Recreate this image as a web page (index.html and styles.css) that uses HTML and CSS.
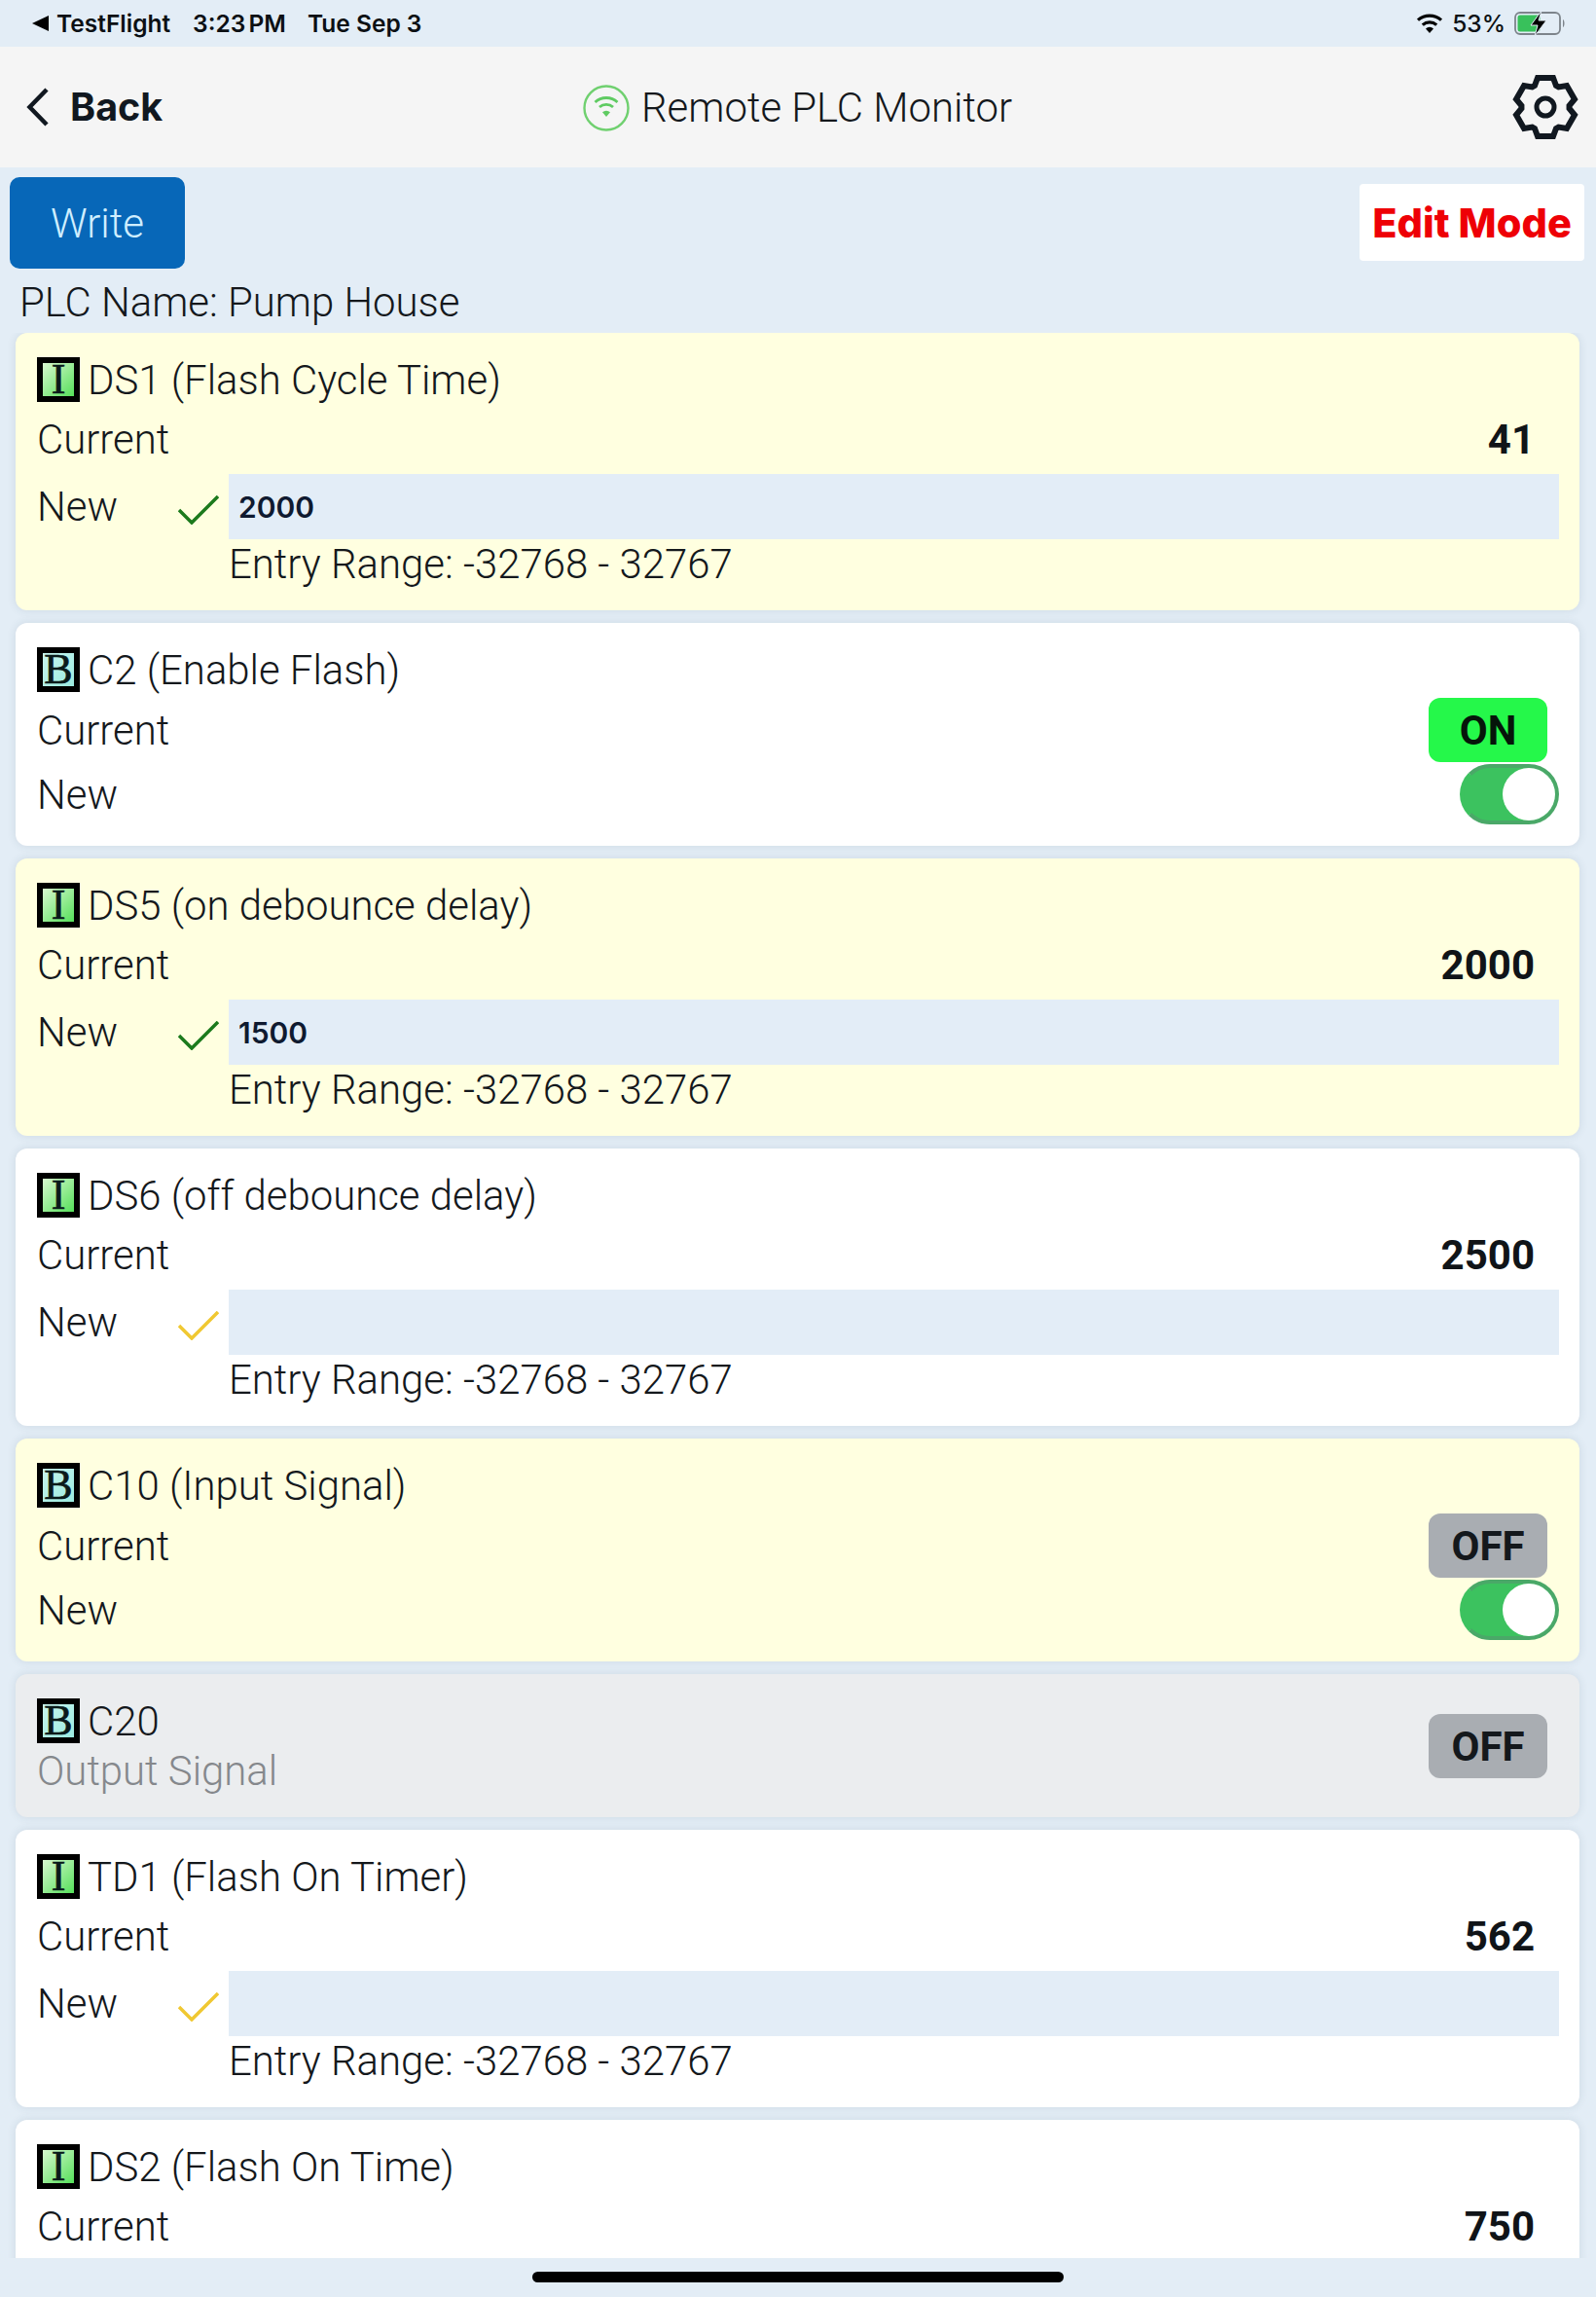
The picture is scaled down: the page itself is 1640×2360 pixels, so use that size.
FILE: index.html
```html
<!DOCTYPE html>
<html lang="en">
<head>
<meta charset="utf-8">
<title>Remote PLC Monitor</title>
<link rel="stylesheet" href="styles.css">
</head>
<body>
<div class="app">
  <div class="status">
    <div class="status-left">
      <svg class="st-back" viewBox="0 0 17 16"><path d="M17 0V16L0 8Z"/></svg>
      <span class="st-app">TestFlight</span>
      <span class="st-time">3:23 PM</span>
      <span class="st-date">Tue Sep 3</span>
    </div>
    <div class="status-right">
      <svg class="st-wifi" viewBox="0 0 28 20"><path d="M14 20l-4-4.600a6 6 0 0 1 8 0z"/><path d="M6.800 11.600a11 11 0 0 1 14.400 0" fill="none" stroke="#000" stroke-width="3.200"/><path d="M2 6.600a18.500 18.500 0 0 1 24 0" fill="none" stroke="#000" stroke-width="3.200"/></svg>
      <span class="st-pct">53%</span>
      <svg class="st-batt" viewBox="0 0 54 26"><rect x="1" y="2" width="46" height="22" rx="5" fill="none" stroke="#7d848b" stroke-width="1.800"/><rect x="3.500" y="4.500" width="23" height="17" rx="2.500" fill="#38c15b"/><path d="M50 9c2 1 2 7 0 8z" fill="#7d848b"/><path d="M28 0L17 15h7l-3 11 12-16h-8z" fill="#000" stroke="#e3edf6" stroke-width="1"/></svg>
    </div>
  </div>

  <header class="nav">
    <div class="nav-back">
      <svg class="chev" viewBox="0 0 24 40"><path d="M21 2L3.500 20 21 38" fill="none" stroke="#111820" stroke-width="4.500"/></svg>
      <span class="back-text">Back</span>
    </div>
    <div class="nav-title">
      <svg class="conn" viewBox="0 0 48 48"><circle cx="24" cy="24" r="22.500" fill="none" stroke="#6fd06f" stroke-width="2.400"/><path d="M24 33l-4-4.800a6 6 0 0 1 8 0z" fill="#5fcb62"/><path d="M17 23a10.500 10.500 0 0 1 14 0" fill="none" stroke="#5fcb62" stroke-width="2.800"/><path d="M12.500 18a17 17 0 0 1 23 0" fill="none" stroke="#5fcb62" stroke-width="2.800"/></svg>
      <span class="title-text">Remote PLC Monitor</span>
    </div>
    <svg class="gear" viewBox="-34 -34 68 68"><path d="M-8-30L8-30L11-22L13.550-20.530L21.980-21.930L29.980-8.070L24.550-1.470L24.550 1.470L29.980 8.070L21.980 21.930L13.550 20.530L11 22L8 30L-8 30L-11 22L-13.550 20.530L-21.980 21.930L-29.980 8.070L-24.550 1.470L-24.550-1.470L-29.980-8.070L-21.980-21.930L-13.550-20.530L-11-22Z" fill="none" stroke="#111820" stroke-width="6" stroke-linejoin="miter"/><circle r="9" fill="none" stroke="#111820" stroke-width="5"/></svg>
  </header>

  <div class="toolbar">
    <button class="write">Write</button>
    <div class="edit-mode">Edit Mode</div>
  </div>
  <div class="plc-name">PLC Name: Pump House</div>

  <main class="list">
    <section class="card yellow">
      <div class="head"><span class="tag tag-i">I</span><span class="name">DS1 (Flash Cycle Time)</span></div>
      <div class="row-cur"><span>Current</span><span class="val">41</span></div>
      <div class="row-new"><span class="new-label">New</span>
        <svg class="check ok" viewBox="0 0 42 30"><path d="M1 15l13 13L41 1"/></svg>
        <input class="entry" value="2000" readonly></div>
      <div class="range">Entry Range: -32768 - 32767</div>
    </section>

    <section class="card">
      <div class="head"><span class="tag tag-b">B</span><span class="name">C2 (Enable Flash)</span></div>
      <div class="row-badge"><span>Current</span><span class="badge on">ON</span></div>
      <div class="row-toggle"><span>New</span><span class="toggle"><span class="knob"></span></span></div>
    </section>

    <section class="card yellow">
      <div class="head"><span class="tag tag-i">I</span><span class="name">DS5 (on debounce delay)</span></div>
      <div class="row-cur"><span>Current</span><span class="val">2000</span></div>
      <div class="row-new"><span class="new-label">New</span>
        <svg class="check ok" viewBox="0 0 42 30"><path d="M1 15l13 13L41 1"/></svg>
        <input class="entry" value="1500" readonly></div>
      <div class="range">Entry Range: -32768 - 32767</div>
    </section>

    <section class="card">
      <div class="head"><span class="tag tag-i">I</span><span class="name">DS6 (off debounce delay)</span></div>
      <div class="row-cur"><span>Current</span><span class="val">2500</span></div>
      <div class="row-new"><span class="new-label">New</span>
        <svg class="check warn" viewBox="0 0 42 30"><path d="M1 15l13 13L41 1"/></svg>
        <input class="entry" value="" readonly></div>
      <div class="range">Entry Range: -32768 - 32767</div>
    </section>

    <section class="card yellow">
      <div class="head"><span class="tag tag-b">B</span><span class="name">C10 (Input Signal)</span></div>
      <div class="row-badge"><span>Current</span><span class="badge off">OFF</span></div>
      <div class="row-toggle"><span>New</span><span class="toggle"><span class="knob"></span></span></div>
    </section>

    <section class="card gray">
      <div class="gray-left">
        <div class="head"><span class="tag tag-b">B</span><span class="name">C20</span></div>
        <div class="sub">Output Signal</div>
      </div>
      <span class="badge off">OFF</span>
    </section>

    <section class="card">
      <div class="head"><span class="tag tag-i">I</span><span class="name">TD1 (Flash On Timer)</span></div>
      <div class="row-cur"><span>Current</span><span class="val">562</span></div>
      <div class="row-new"><span class="new-label">New</span>
        <svg class="check warn" viewBox="0 0 42 30"><path d="M1 15l13 13L41 1"/></svg>
        <input class="entry" value="" readonly></div>
      <div class="range">Entry Range: -32768 - 32767</div>
    </section>

    <section class="card cut">
      <div class="head"><span class="tag tag-i">I</span><span class="name">DS2 (Flash On Time)</span></div>
      <div class="row-cur"><span>Current</span><span class="val">750</span></div>
    </section>
  </main>

  <div class="home-area"><div class="home-bar"></div></div>
</div>
</body>
</html>
```
FILE: styles.css
```css
* { box-sizing: border-box; }
html, body { margin: 0; padding: 0; }
body {
  width: 1640px;
  height: 2360px;
  overflow: hidden;
  background: #e3edf6;
  font-family: Roboto, "Liberation Sans", sans-serif;
  font-weight: 300;
  font-size: 41.900px;
  color: #14181c;
}
.app { display: flex; flex-direction: column; height: 2360px; }

.status {
  height: 48px;
  flex: none;
  display: flex;
  justify-content: space-between;
  align-items: center;
  padding: 0 30px 0 33px;
  font-family: Inter, "Liberation Sans", sans-serif;
  font-size: 24.500px;
  font-weight: 600;
  color: #0c1014;
}
.status-left, .status-right { display: flex; align-items: center; }
.st-back { width: 17px; height: 16px; margin-right: 8px; }
.st-time { margin-left: 23px; word-spacing: -3px; }
.st-date { margin-left: 22px; }
.st-wifi { width: 28px; height: 20px; margin-right: 9px; }
.st-batt { width: 54px; height: 26px; margin-left: 9px; }
.st-pct { font-weight: 500; }

.nav {
  height: 124px;
  flex: none;
  background: #f5f5f5;
  display: flex;
  align-items: center;
  justify-content: space-between;
  padding: 0 18px 0 27px;
  position: relative;
}
.nav-back { display: flex; align-items: center; }
.chev { width: 24px; height: 40px; margin-right: 21px; }
.back-text { font-family: Inter, "Liberation Sans", sans-serif; font-weight: 700; font-size: 39.500px; color: #111820; }
.nav-title {
  position: absolute;
  left: 599px;
  top: 38px;
  display: flex;
  align-items: center;
  gap: 12px;
}
.conn { width: 48px; height: 48px; }
.title-text { font-size: 41.900px; color: #14181c; }
.gear { width: 68px; height: 68px; }

.toolbar {
  flex: none;
  height: 94px;
  margin-top: 10px;
  padding: 0 12px 0 10px;
  display: flex;
  justify-content: space-between;
  align-items: flex-start;
}
.write {
  width: 180px;
  height: 94px;
  border: 0;
  border-radius: 10px;
  background: #0767b8;
  color: #cfeeff;
  font-family: Roboto, sans-serif;
  font-weight: 300;
  font-size: 42px;
}
.edit-mode {
  width: 231px;
  height: 79px;
  margin-top: 7px;
  background: #fff;
  border-radius: 4px;
  color: #ee0006;
  font-family: Inter, "Liberation Sans", sans-serif;
  font-weight: 800;
  font-size: 41.500px;
  display: flex;
  align-items: center;
  justify-content: center;
}
.plc-name {
  flex: none;
  height: 66px;
  line-height: 69px;
  padding-left: 20px;
}

.list {
  flex: none;
  height: 1978px;
  overflow: hidden;
  padding: 0 17px 0 16px;
}
.card {
  display: flow-root;
  background: #fff;
  border-radius: 12px;
  margin-bottom: 13px;
  padding: 25px 21px 0 22px;
  box-shadow: 0 0 10px rgba(40, 70, 90, 0.12);
}
.card.yellow { background: #ffffe0; }
.card.cut { padding-bottom: 40px; }
.card.gray {
  background: #ebedef;
  display: flex;
  align-items: center;
  justify-content: space-between;
  padding: 25px 33px 24px 22px;
}
.head { display: flex; align-items: center; height: 46px; line-height: 46px; }
.name { padding-top: 2px; }
.tag {
  width: 44px;
  height: 46px;
  margin-right: 8px;
  border: 6px solid #000;
  font-family: "Liberation Serif", serif;
  font-weight: 400;
  font-size: 44px;
  line-height: 34px;
  -webkit-text-stroke: 0.7px #0a1a1a;
  color: #0a1a1a;
  text-align: center;
  flex: none;
}
.tag-i { background: linear-gradient(135deg, #d8f8d0, #56e05a); }
.tag-b { background: linear-gradient(135deg, #c8f5ee, #9cebe0); }

.row-cur {
  display: flex;
  justify-content: space-between;
  align-items: center;
  height: 46px;
  margin-top: 15px;
  padding-right: 25px;
}
.val { font-family: Roboto, "Liberation Sans", sans-serif; font-weight: 700; font-size: 42px; color: #101418; }
.row-new { display: flex; align-items: center; height: 67px; margin-top: 13px; }
.new-label { width: 145px; }
.check { width: 42px; height: 30px; margin-right: 10px; margin-top: 6px; }
.check path { fill: none; stroke-width: 3.500px; }
.check.ok path { stroke: #1c7a1c; }
.check.warn path { stroke: #f0c832; }
.entry {
  flex: 1;
  min-width: 0;
  height: 67px;
  border: 0;
  outline: 0;
  background: #e3edf7;
  padding: 0 10px;
  font-family: Inter, "Liberation Sans", sans-serif;
  font-weight: 600;
  font-size: 30px;
  color: #0f1a30;
  border-radius: 0;
}
.range { padding-left: 197px; height: 71px; line-height: 48px; margin-top: 2px; }

.row-badge {
  display: flex;
  justify-content: space-between;
  align-items: center;
  height: 66px;
  margin-top: 6px;
  padding-right: 12px;
}
.row-toggle {
  display: flex;
  justify-content: space-between;
  align-items: center;
  height: 62px;
  margin-top: 2px;
  margin-bottom: 22px;
}
.badge {
  width: 122px;
  height: 66px;
  border-radius: 12px;
  display: flex;
  align-items: center;
  justify-content: center;
  font-family: Roboto, "Liberation Sans", sans-serif;
  font-weight: 700;
  font-size: 42px;
  flex: none;
}
.badge.on { background: #25f84a; color: #06150a; }
.badge.off { background: #a9adb2; color: #14181c; }
.toggle {
  width: 102px;
  height: 62px;
  border-radius: 31px;
  background: #3cc25f;
  border: 4px solid #4aa868;
  border-left-color: #3cc25f;
  position: relative;
  flex: none;
}
.knob {
  position: absolute;
  right: 0;
  top: 0;
  width: 54px;
  height: 54px;
  border-radius: 50%;
  background: #fff;
}
.sub { height: 46px; line-height: 46px; margin-top: 6px; color: #85888c; }

.home-area {
  flex: 1;
  display: flex;
  justify-content: center;
  padding-top: 14px;
}
.home-bar { width: 546px; height: 11px; border-radius: 6px; background: #000; }
```
